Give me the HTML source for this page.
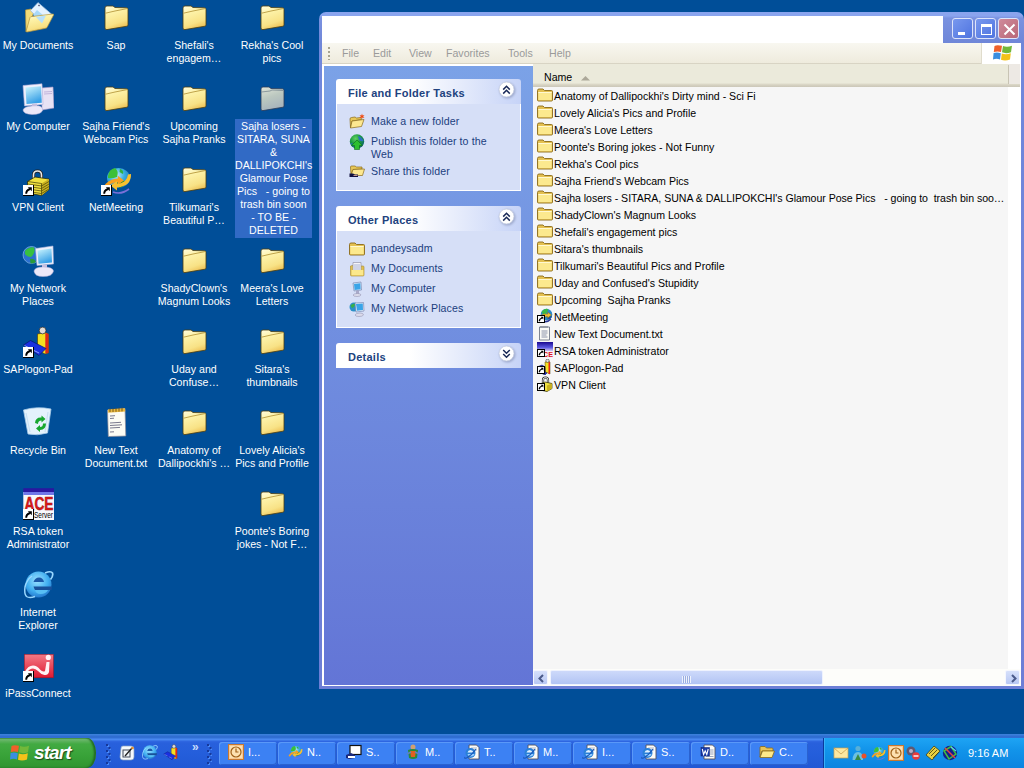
<!DOCTYPE html>
<html><head><meta charset="utf-8"><style>
*{margin:0;padding:0;box-sizing:border-box}
html,body{width:1024px;height:768px;overflow:hidden}
body{background:#004e98;position:relative;font-family:"Liberation Sans", sans-serif;font-size:11px}
.lbl{position:absolute;width:80px;text-align:center;color:#fff;font-size:10.6px;line-height:13px;white-space:nowrap}
.sel{position:absolute;background:#316ac5;color:#fff;text-align:center;font-size:10.6px;line-height:13px;white-space:nowrap;padding-top:1px}
#win{position:absolute;left:319px;top:12px;width:705px;height:677px;background:#7b8ad8;border-radius:7px 7px 0 0}
#title{position:absolute;left:3px;top:4px;width:621px;height:27px;background:#fff}
#win{background:linear-gradient(#8aa4ee 0,#8aa4ee 4px,#7a92e0 6px,#6f86d8 31px,#7088dc 40px,#6c7ed6 100%)}
#menubar{position:absolute;left:3px;top:31px;width:699px;height:21px;background:linear-gradient(#f8f7f0,#eeebdd);border-bottom:1px solid #d8d4c4}
#logo{position:absolute;left:662px;top:31px;width:40px;height:21px;background:#fff;border-left:1px solid #e0dccc}
.menu{position:absolute;top:4px;color:#9a9a9a;font-size:10.6px}
#content{position:absolute;left:3px;top:52px;width:699px;height:622px;background:#fff}
#tp{position:absolute;left:2px;top:2px;width:209px;height:619px;background:linear-gradient(#7ba2e7,#6375d6)}
.box{position:absolute;left:12px;width:185px}
.bh{position:absolute;left:0;top:0;width:185px;height:25px;border-radius:3px 3px 0 0;background:linear-gradient(90deg,#fff 40%,#c6d3f7)}
.bht{position:absolute;left:12px;top:8px;font-weight:bold;font-size:11px;letter-spacing:0.25px;color:#21427e}
.bb{position:absolute;left:0;top:25px;width:185px;background:#d6dff7;border:1px solid #fff;border-top:0}
.lk{position:absolute;left:35px;color:#203e7e;font-size:10.6px;line-height:13px;letter-spacing:0.1px;white-space:nowrap}
.chev{position:absolute;left:162px;top:2px;filter:drop-shadow(1px 1px 1px #98a4c8)}
#list{position:absolute;left:211px;top:0;width:488px;height:622px;background:#fff}
#listbg{position:absolute;left:0;top:0;width:475px;height:605px;background:#f6f6f6}
#hdr{position:absolute;left:0;top:0;width:487px;height:23px;background:linear-gradient(#ebeadb 0,#ebeadb 19px,#dedbcb 20px,#d6d2c2 21px,#cbc7b8 23px)}
.li{position:absolute;left:554px;font-size:10.6px;color:#000;white-space:nowrap;line-height:13px}
.tbtn{position:absolute;top:742px;width:58px;height:23px;background:#3c81f3;border-radius:3px;box-shadow:inset 1px 1px 0 #5a98f8, inset -1px -1px 0 #2a62d0}
.wb{position:absolute;top:6px;width:21px;height:21px;border:1px solid #dde4fa;border-radius:3px;background:linear-gradient(135deg,#7898ee,#4f74e0)}
#hsb{position:absolute;left:0;top:605px;width:488px;height:17px;background:#fdfdfa}
.sbtn{position:absolute;top:1px;width:15px;height:15px;background:linear-gradient(#d6e0fa,#b8c8f4);border:1px solid #f4f6fe;border-radius:2px}
#thumb{position:absolute;left:17px;top:1px;width:273px;height:15px;background:linear-gradient(#cdd9fa,#b2c4f4);border:1px solid #eef2fe;border-radius:2px}
#taskbar{position:absolute;left:0;top:734px;width:1024px;height:34px;background:linear-gradient(#3a7cd8 0,#3a82dc 1px,#2f6cd0 2px,#3070d4 4px,#4a8af0 5px,#4686f0 6px,#3068e2 7px,#2860dc 9px,#245edb 20px,#2158d4 100%)}
#start{position:absolute;left:0;top:738px;width:96px;height:30px;background:linear-gradient(#3a8a3a 0,#74bc74 1px,#5eb25e 3px,#42aa42 6px,#38a238 18px,#309430 100%);border-radius:0 9px 9px 0/0 15px 15px 0;box-shadow:inset -2px 0 2px #226a22}
#starttxt{position:absolute;left:34px;top:742px;color:#fff;font-style:italic;font-weight:bold;font-size:19px;letter-spacing:-0.9px;text-shadow:1px 1px 1px #1a4a1a}
.grip{position:absolute;top:744px;width:5px;height:21px}
#tray{position:absolute;left:823px;top:738px;width:201px;height:30px;background:linear-gradient(#1ea4f4,#1294ea 40%,#0c84e0);border-left:1px solid #0a3a9c;box-shadow:inset 1px 0 0 #38b0f8}
.tbt{position:absolute;top:746px;color:#fff;font-size:11px}
</style></head><body>
<svg width="0" height="0" style="position:absolute"><defs>
<linearGradient id="gFold" x1="0" y1="0" x2="0.35" y2="1">
  <stop offset="0" stop-color="#fffce0"/><stop offset="0.35" stop-color="#fdf2a8"/><stop offset="0.8" stop-color="#f8e286"/><stop offset="1" stop-color="#f0c860"/>
</linearGradient>
<linearGradient id="gFoldSel" x1="0" y1="0" x2="0.35" y2="1">
  <stop offset="0" stop-color="#e0e4d8"/><stop offset="0.5" stop-color="#bcc8c0"/><stop offset="1" stop-color="#a8b4bc"/>
</linearGradient>
<linearGradient id="gScreen" x1="0" y1="0" x2="0.4" y2="1">
  <stop offset="0" stop-color="#d0f8ff"/><stop offset="1" stop-color="#38a0e6"/>
</linearGradient>
<linearGradient id="gRed" x1="0" y1="0" x2="0" y2="1">
  <stop offset="0" stop-color="#f27a86"/><stop offset="1" stop-color="#e01830"/>
</linearGradient>
<radialGradient id="gGlobe" cx="0.4" cy="0.35" r="0.7">
  <stop offset="0" stop-color="#c9f0ff"/><stop offset="0.5" stop-color="#3ab0e0"/><stop offset="1" stop-color="#1f6fb8"/>
</radialGradient>
<radialGradient id="gIE" cx="0.45" cy="0.35" r="0.7">
  <stop offset="0" stop-color="#9ae0ff"/><stop offset="0.6" stop-color="#40aef0"/><stop offset="1" stop-color="#2070c8"/>
</radialGradient>
<symbol id="folder" viewBox="0 0 32 32">
  <path d="M5 6 Q5 4 7 4 L13 4 L15 5.5 L26.5 5.8 Q28 5.9 28 7.5 L28 23 Q28 24 27 24.2 L7 27.6 Q5 27.9 5 26 Z" fill="url(#gFold)" stroke="#4a3c10" stroke-width="0.8"/>
  <path d="M5.5 11.2 L15 9 L27.5 6.5" fill="none" stroke="#b89a40" stroke-width="0.9"/>
</symbol>
<symbol id="folderSel" viewBox="0 0 32 32">
  <path d="M5 6 Q5 4 7 4 L13 4 L15 5.5 L26.5 5.8 Q28 5.9 28 7.5 L28 23 Q28 24 27 24.2 L7 27.6 Q5 27.9 5 26 Z" fill="url(#gFoldSel)" stroke="#2a3a58" stroke-width="0.8"/>
  <path d="M5.5 9 L14 8 L16 7 L27.5 7.5" fill="none" stroke="#6f7d88" stroke-width="0.7"/>
</symbol>
<symbol id="folderS" viewBox="0 0 16 16">
  <path d="M0.5 3.5 Q0.5 2 2 2 L6 2 L7.5 3.5 L14.5 3.5 Q15.5 3.5 15.5 4.5 L15.5 13 Q15.5 14 14.5 14 L1.5 14 Q0.5 14 0.5 13 Z" fill="#e4c050" stroke="#8a6a18" stroke-width="0.9"/>
  <path d="M1.3 5.5 L14.7 5.5 L14.7 13.2 L1.3 13.2 Z" fill="#fce98e"/>
  <path d="M1.3 5.5 L14.7 5.5" stroke="#fff8d0" stroke-width="1"/>
</symbol>
<symbol id="netmeetS" viewBox="0 0 16 16">
  <circle cx="9.5" cy="6.5" r="5.8" fill="#2a88c8"/>
  <path d="M4.5 4 Q7 0 11 1 Q11 5 7 7 Z" fill="#38b848"/>
  <path d="M11 7 Q14 6 15 9 Q13 12 10.5 11 Z" fill="#1a5aa0"/>
  <path d="M1 10 Q5 5 11 6 L10.5 4 L14.5 7 L10.5 10 L10.5 8.5 Q6 8.5 3 12 Z" fill="#f0c030" stroke="#806010" stroke-width="0.4"/>
  <path d="M6 13 Q10 15 14 11" stroke="#2a3a98" stroke-width="1.6" fill="none"/>
</symbol>
<symbol id="txtS" viewBox="0 0 16 16">
  <path d="M2.5 2 L12.5 2 L12.5 15 L2.5 15 Z" fill="#fafaf6" stroke="#707888" stroke-width="0.9"/>
  <path d="M4 1 L4 3 M6 1 L6 3 M8 1 L8 3 M10 1 L10 3" stroke="#606878" stroke-width="0.8"/>
  <path d="M4.5 6 L10.5 6 M4.5 8 L10.5 8 M4.5 10 L9.5 10 M4.5 12 L10.5 12" stroke="#8088a0" stroke-width="0.9"/>
</symbol>
<symbol id="aceS" viewBox="0 0 16 16">
  <defs><linearGradient id="gAceS" x1="0" y1="0" x2="0" y2="1"><stop offset="0" stop-color="#1a0890"/><stop offset="0.6" stop-color="#5a58e0"/><stop offset="1" stop-color="#d8c8f0"/></linearGradient></defs>
  <rect x="0" y="0" width="16" height="9" fill="url(#gAceS)"/>
  <rect x="0" y="9" width="16" height="7" fill="#f4f0f8"/>
  <text x="6" y="15" font-family="Liberation Sans" font-weight="bold" font-size="8" fill="#e01020" textLength="10" lengthAdjust="spacingAndGlyphs">CE</text>
</symbol>
<symbol id="sapS" viewBox="0 0 16 16">
  <path d="M0 8 L5 6 L13 11 L8 16 L0 12 Z" fill="#1a28c8" stroke="#0a1060" stroke-width="0.6"/>
  <path d="M8 3 L12 2.5 L13 3 L13 15 L8.5 13 Z" fill="#f4e020" stroke="#403000" stroke-width="0.5"/>
  <path d="M11.5 3 L13 3 L13 15 L11.5 15 Z" fill="#e02818"/>
  <circle cx="10.5" cy="1.8" r="1.7" fill="#e0dcd8" stroke="#222" stroke-width="0.5"/>
</symbol>
<symbol id="vpnS" viewBox="0 0 16 16">
  <path d="M6 7 L6 4 Q6 1.5 8.5 1.5 Q11 1.5 11 4 L11 7" fill="none" stroke="#202020" stroke-width="2.2"/>
  <path d="M6 7 L6 4 Q6 1.5 8.5 1.5 Q11 1.5 11 4 L11 7" fill="none" stroke="#e8e8e8" stroke-width="1"/>
  <path d="M3 8 L8 6 L15 7.5 L15 12.5 L10 15.5 L3 14 Z" fill="#f0e040" stroke="#202000" stroke-width="0.7"/>
  <path d="M10 9.5 L15 7.5 L15 12.5 L10 15.5 Z" fill="#c8b020"/>
</symbol>
<symbol id="mydocs" viewBox="0 0 32 32">
  <path d="M3.5 8 L9 7 L12 10 L4 29.5 Z" fill="#f4dc78" stroke="#b8963a" stroke-width="0.7"/>
  <path d="M16 0.5 L30 12.5 L22 23 L8.5 8.5 Z" fill="#e4f2ff" stroke="#9ab8d8" stroke-width="0.7"/>
  <path d="M15 8 L22 14 L18 19 L11 13 Z" fill="#a8d8f8"/>
  <path d="M16.5 3 L17.5 4" stroke="#404060" stroke-width="1.2"/>
  <path d="M4 29.5 L8 15.5 Q8.5 14.5 10 14.5 L31 12 Q32 12 31.6 13 L25 25.5 Q24.5 26.2 23.5 26.3 L5 30 Z" fill="url(#gFold)" stroke="#b8963a" stroke-width="0.7"/>
  <path d="M14 15 L20 21.5 L24 13.5 Z" fill="#b8e0fa"/>
</symbol>
<symbol id="mycomp" viewBox="0 0 32 32">
  <path d="M19.5 5 L31 4 L32 25 L20 27 Z" fill="#e8e2f4" stroke="#a898c8" stroke-width="0.6"/>
  <path d="M22 9 L30 8.5 M22 11 L30 10.5" stroke="#b0a0d0" stroke-width="0.7"/>
  <path d="M1 2.5 L20 0.8 L21 21.5 L2.5 23 Z" fill="#f0f0fc" stroke="#b0acd8" stroke-width="0.6"/>
  <path d="M3.5 4.5 L19 3.2 L19.8 19.8 L4.5 21 Z" fill="url(#gScreen)"/>
  <path d="M10 21 L15 20.5 L15 26 L10 26.5 Z" fill="#c8c0e0"/>
  <path d="M1 27 Q2 23.5 10 23 L16 22.8 Q21 23.5 20.5 27.5 Q19 31.5 10 31.5 Q1.5 31 1 27 Z" fill="#ece8f8" stroke="#b8b0d8" stroke-width="0.5"/>
</symbol>
<symbol id="vpn" viewBox="0 0 32 32">
  <path d="M11.5 15 L11.5 11 Q11.5 7 15.5 7 Q19.5 7 19.5 11 L19.5 14" fill="none" stroke="#202020" stroke-width="3"/>
  <path d="M11.5 15 L11.5 11 Q11.5 7 15.5 7 Q19.5 7 19.5 11 L19.5 14" fill="none" stroke="#e8e8e8" stroke-width="1.6"/>
  <path d="M5.5 17.5 L13 13 L27 15 L27 25.5 L19.5 31.5 L5.5 29 Z" fill="#f0e040" stroke="#202000" stroke-width="0.7"/>
  <path d="M19.5 19.5 L27 15 L27 25.5 L19.5 31.5 Z" fill="#c8b020"/>
  <path d="M5.5 17.5 L19.5 19.5 L19.5 31.5" fill="none" stroke="#202000" stroke-width="0.6"/>
  <path d="M6 20 L19.5 22 M6 22.5 L19.5 24.5 M6 25 L19.5 27 M6 27.5 L19.5 29.5 M19.5 22 L27 17.5 M19.5 24.5 L27 20 M19.5 27 L27 22.5 M19.5 29.5 L27 25" stroke="#5a5008" stroke-width="0.8"/>
</symbol>
<symbol id="shortcut" viewBox="0 0 11 11">
  <rect x="0" y="0" width="11" height="11" fill="#000"/>
  <rect x="0" y="0" width="10" height="10" fill="#fff"/>
  <path d="M4.8 2.2 L8.8 2.2 L8.8 6.2 Z" fill="#000"/>
  <path d="M3.2 8.8 Q3 5.5 7 4" fill="none" stroke="#000" stroke-width="1.9"/>
</symbol>
<symbol id="shortcutS" viewBox="0 0 8 8">
  <rect x="0.5" y="0.5" width="7" height="7" fill="#fff" stroke="#000" stroke-width="1"/>
  <path d="M3.6 1.8 L6.3 1.8 L6.3 4.5 Z" fill="#000"/>
  <path d="M2.3 6.3 Q2.2 4 5 3" fill="none" stroke="#000" stroke-width="1.3"/>
</symbol>
<symbol id="netmeet" viewBox="0 0 32 32">
  <ellipse cx="18.5" cy="14" rx="11.5" ry="10" fill="url(#gGlobe)"/>
  <path d="M8 12 Q9 5 15 4 Q19 7 17 13 Q12 15 8 14 Z" fill="#3cc038"/>
  <path d="M20 5 Q24 6 23 10 Q21 9 19.5 8 Z" fill="#30b040"/>
  <path d="M17 17 Q22 15 27 18 Q24 23 19 24 Q17 21 17 17 Z" fill="#1a8a30"/>
  <path d="M3 24 Q7 15 18 14.5 L17.5 11.5 L24 16.5 L17.5 21 L17.5 18 Q10 18.5 6 25 Z" fill="#f8a020"/>
  <path d="M31 10 Q31.5 22 17 23.5 L17 26.5 L10.5 21.5 L17 17 L17 20 Q27 19 28 10.5 Z" fill="#f8c030"/>
  <path d="M13 28 Q21 31 29 25" stroke="#7a70d8" stroke-width="1.6" fill="none"/>
</symbol>
<symbol id="network" viewBox="0 0 32 32">
  <circle cx="9.5" cy="10" r="8.5" fill="#2a70d0" stroke="#9ac8f0" stroke-width="0.6"/>
  <path d="M3 6 Q7 1.5 12 2.5 Q14 8 9 12 Q5 12 3 9 Z" fill="#38c040"/>
  <path d="M8 14 Q12 13 14 17 Q11 19 8.5 18.5 Z" fill="#2a9a3a"/>
  <path d="M13.5 3.5 L31 1 L31.5 19 L15 20.5 Z" fill="#eef0fc" stroke="#a8b0d8" stroke-width="0.6"/>
  <path d="M15.5 5.5 L29.5 3.5 L30 17.5 L16.5 18.8 Z" fill="url(#gScreen)"/>
  <path d="M20 20 L25 19.5 L25 24 L20 24.5 Z" fill="#c8c0e0"/>
  <path d="M12 26 Q13 22 21 22 Q31 22 31.5 26 Q30.5 31.5 21 31.5 Q12.5 31.5 12 26 Z" fill="#ece8f8" stroke="#b8b0d8" stroke-width="0.5"/>
</symbol>
<symbol id="sap" viewBox="0 0 32 32">
  <path d="M15.5 8 L23.5 6.5 L26.5 8 L26.5 27 L23 28 L15.5 24 Z" fill="#f4e020" stroke="#503000" stroke-width="0.6"/>
  <path d="M23.3 6.8 L26.5 8 L26.5 27 L23.3 27.5 Z" fill="#e02818"/>
  <path d="M1.5 19 L8.5 14.5 L24 22.5 L17 29.5 Z" fill="#1a30e0" stroke="#0a1470" stroke-width="0.7"/>
  <path d="M2.5 19.5 L8.5 22.5 M11 24 L17 27" stroke="#b0c0ff" stroke-width="0.8" fill="none"/>
  <circle cx="20.6" cy="4.5" r="3.4" fill="#e0dcd8" stroke="#222" stroke-width="0.7"/>
</symbol>
<symbol id="recycle" viewBox="0 0 32 32">
  <path d="M1.5 3 Q15 -1 29 2 L25.5 26 Q15 29 6 27 Z" fill="#e4f2fc" stroke="#a8cce8" stroke-width="0.8"/>
  <path d="M4 6 L8 25 M26 5 L23 25" stroke="#c8e0f4" stroke-width="1.2"/>
  <path d="M13 16 Q13.5 10 19.5 10.5 L19.5 8.5 L23.5 12 L19.5 15.5 L19.5 13.5 Q16 13.5 16 17 Z" fill="#18a830"/>
  <path d="M24 16.5 Q24 23 18 23 L18 25 L14 21.5 L18 18 L18 20 Q21 20 21 16.5 Z" fill="#18a830"/>
</symbol>
<symbol id="txt" viewBox="0 0 32 32">
  <path d="M7.5 3 L25 1.5 L25.8 29 L8.3 29.5 Z" fill="#fcfcf4" stroke="#8a8a98" stroke-width="0.7"/>
  <path d="M8 2.5 L25 1.2 L25.2 4.5 L8.2 5.8 Z" fill="#e8b840"/>
  <path d="M10 1.5 L10 5 M13 1.3 L13 5 M16 1 L16 4.8 M19 0.8 L19 4.6 M22 0.6 L22 4.4" stroke="#705010" stroke-width="0.9"/>
  <path d="M10 9 L15 8.7 M10 11.5 L14 11.2 M10 16 L21 15.3 M10 18.5 L22 17.8 M10 21 L20 20.4 M10 25 L14 24.8" stroke="#6a6a80" stroke-width="0.9"/>
</symbol>
<symbol id="ace" viewBox="0 0 32 32">
  <rect x="1.3" y="0.2" width="31.5" height="3.8" fill="#2a18a0"/>
  <rect x="1.3" y="4" width="31.5" height="28" fill="#f8f8fc"/>
  <rect x="1.3" y="4" width="31.5" height="3" fill="#7078e8"/>
  <text x="2.5" y="21.5" font-family="Liberation Sans" font-weight="bold" font-size="18" fill="#e01818" stroke="#901010" stroke-width="0.5" textLength="29" lengthAdjust="spacingAndGlyphs">ACE</text>
  <text x="12" y="30" font-family="Liberation Sans" font-size="8.5" fill="#000" textLength="19" lengthAdjust="spacingAndGlyphs">Server</text>
</symbol>
<symbol id="ie" viewBox="0 0 32 32">
  <circle cx="16.5" cy="15.5" r="13" fill="url(#gIE)"/>
  <path d="M11.5 13 Q13 8.5 17 8.5 Q21 8.5 22 13 Z" fill="#1a58a8"/>
  <path d="M11.5 17.5 L30 17.5 L29.5 21 L13 21 Q12 19 11.5 17.5 Z" fill="#18509a"/>
  <path d="M29.5 21 L26 21 Q24 25 18.5 25 Q14 25 13 21 Z" fill="#58bff4"/>
  <path d="M10 7 Q4.5 11 3 18 Q2 25 4.5 27.5 Q7.5 29.5 13 27.5" fill="none" stroke="#9ad8ff" stroke-width="1.5"/>
  <path d="M23 4 Q29 1.5 30.5 4 Q31.5 7 28.5 10.5" fill="none" stroke="#9ad8ff" stroke-width="1.7"/>
</symbol>
<symbol id="ipass" viewBox="0 0 32 32">
  <rect x="2.3" y="4.3" width="29.2" height="23.5" fill="url(#gRed)" stroke="#a01020" stroke-width="0.5"/>
  <path d="M3 21.5 Q6 15.5 11 15.5 Q15 15.5 18 19.5 Q21 22.5 23 21 L24.5 12 L27.5 12 L27 22 Q26 25.5 22.5 25 Q19 24.5 16 21 Q13.5 18.5 11 18.5 Q7.5 18.5 5 22.5 Z" fill="#fff2f4"/>
  <circle cx="26.3" cy="7.4" r="2.6" fill="#fff2f4"/>
</symbol>

<symbol id="clock" viewBox="0 0 16 16">
  <rect x="0.5" y="0.5" width="15" height="15" fill="#f8c890" stroke="#c87830"/>
  <rect x="2" y="2" width="12" height="12" fill="#fde0b0"/>
  <circle cx="8" cy="8" r="5" fill="none" stroke="#a06018" stroke-width="1.2"/>
  <path d="M8 4.5 L8 8 L10.5 8" stroke="#a06018" stroke-width="1.2" fill="none"/>
</symbol>
<symbol id="sapmon" viewBox="0 0 16 16">
  <rect x="4" y="1.5" width="11" height="9" fill="#fff" stroke="#111" stroke-width="1.2"/>
  <path d="M0 11 L5 9 L9 11 L9 14 L3 15 L0 14 Z" fill="#1a2a80"/>
  <rect x="2" y="12" width="7" height="2" fill="#fff"/>
</symbol>
<symbol id="fig" viewBox="0 0 16 16">
  <circle cx="8" cy="3" r="2.5" fill="#d0a070"/>
  <path d="M3 6 Q8 4 13 6 L12 14 Q8 16 4 14 Z" fill="#2a8a3a"/>
  <path d="M5 7 L11 7 L10 13 L6 13 Z" fill="#e06020"/>
  <path d="M2 10 L6 8 M14 10 L10 8" stroke="#6080c0" stroke-width="1.5"/>
</symbol>
<symbol id="iedoc" viewBox="0 0 16 16">
  <path d="M5 1 L12.5 1 L15 3.5 L15 15 L5 15 Z" fill="#fbfbf8" stroke="#505060" stroke-width="0.9"/>
  <path d="M7 4 L13 4 M7 6 L13 6" stroke="#a0a8c0" stroke-width="0.8"/>
  <circle cx="6.5" cy="9" r="5" fill="#2a80d8"/>
  <path d="M3.5 8.5 L9.5 8.5 Q9 6 6.5 6 Q4 6 3.5 8.5 Z" fill="#dff0ff"/>
  <path d="M3.5 10 L10.5 10 Q10 12.5 6.5 12.5 Q4 12.5 3.5 10 Z" fill="#9ad0ff"/>
  <path d="M1 13 Q0 15 2.5 14 Q8 11 12 5" fill="none" stroke="#1a58b8" stroke-width="1.1"/>
</symbol>
<symbol id="word" viewBox="0 0 16 16">
  <path d="M4 1 L12.5 1 L15 3.5 L15 15 L4 15 Z" fill="#fbfbf8" stroke="#505060" stroke-width="0.9"/>
  <path d="M10 6 L13.5 6 M10 8 L13.5 8 M10 10 L13.5 10 M6 12.5 L13.5 12.5" stroke="#8090b0" stroke-width="0.8"/>
  <rect x="1" y="3.5" width="8.5" height="8.5" fill="#1a3aa8" stroke="#0a1a60" stroke-width="0.5"/>
  <path d="M2.3 5 L3.6 10.5 L5.2 6.8 L6.8 10.5 L8.2 5" fill="none" stroke="#fff" stroke-width="1.1"/>
</symbol>
<symbol id="folderOpen" viewBox="0 0 16 16">
  <path d="M1 3.5 Q1 2.5 2 2.5 L6 2.5 L7.5 4 L13 4 Q14 4 14 5 L14 7 L3 7 L1 13 Z" fill="#e8c458" stroke="#8a6a18" stroke-width="0.8"/>
  <path d="M3.5 7 L15.5 7 L13 13.5 L1 13.5 Z" fill="#fde88a" stroke="#8a6a18" stroke-width="0.8"/>
</symbol>

<symbol id="gripdots" viewBox="0 0 5 21">
  <path d="M1 1h2v2h-2z M3.5 4h2v2h-2z M1 7h2v2h-2z M3.5 10h2v2h-2z M1 13h2v2h-2z M3.5 16h2v2h-2z M1 19h2v2h-2z" fill="#4a8af8"/>
  <path d="M0 0h2v2h-2z M2.5 3h2v2h-2z M0 6h2v2h-2z M2.5 9h2v2h-2z M0 12h2v2h-2z M2.5 15h2v2h-2z M0 18h2v2h-2z" fill="#16389a"/>
</symbol>
<symbol id="winlogo" viewBox="0 0 20 18">
  <path d="M1.5 2 Q4 0.5 9 1.8 L8 8 Q4.5 6.8 0.8 8 Z" fill="#f0602a"/>
  <path d="M10 2 Q14 3.5 19 1.8 L18 8.2 Q13 10 9 8.3 Z" fill="#72b83a"/>
  <path d="M0.6 9 Q4 8 7.8 9.2 L7 15.5 Q3.5 14.2 0 15.5 Z" fill="#3a8ee0"/>
  <path d="M8.8 9.4 Q13 11 17.8 9.2 L17 15.6 Q12 17.5 8 15.8 Z" fill="#f4c21a"/>
</symbol>
<symbol id="chevUp" viewBox="0 0 17 17">
  <circle cx="8.5" cy="8.5" r="7.5" fill="#fff" stroke="#c4cce0" stroke-width="0.8"/>
  <path d="M5.2 8.6 L8.5 5.3 L11.8 8.6 M5.2 12.6 L8.5 9.3 L11.8 12.6" fill="none" stroke="#1a2a58" stroke-width="1.5"/>
</symbol>
<symbol id="chevDn" viewBox="0 0 17 17">
  <circle cx="8.5" cy="8.5" r="7.5" fill="#fff" stroke="#c4cce0" stroke-width="0.8"/>
  <path d="M5.2 5 L8.5 8.3 L11.8 5 M5.2 9 L8.5 12.3 L11.8 9" fill="none" stroke="#1a2a58" stroke-width="1.5"/>
</symbol>
<symbol id="newfolder" viewBox="0 0 16 16">
  <path d="M1 6 Q1 4.5 2.5 4.5 L6 4 L7.5 5 L12 4.5 L12.5 6.5 L3 8 L1.5 15 Z" fill="#e8c858" stroke="#8a6a18" stroke-width="0.7"/>
  <path d="M3 8 L15 6.5 L12.5 13.5 L1.5 15 Z" fill="#fde890" stroke="#8a6a18" stroke-width="0.7"/>
  <path d="M13 0.5 L13.6 2.5 L15.5 2 L14.2 3.4 L15.5 5 L13.6 4.4 L13 6 L12.4 4.4 L10.5 5 L11.8 3.4 L10.5 2 L12.4 2.5 Z" fill="#f04a10"/>
</symbol>
<symbol id="publish" viewBox="0 0 16 16">
  <defs><radialGradient id="gPub" cx="0.4" cy="0.3" r="0.75"><stop offset="0" stop-color="#60d060"/><stop offset="0.5" stop-color="#1a9a40"/><stop offset="1" stop-color="#0a5a70"/></radialGradient></defs>
  <circle cx="8" cy="7.5" r="7.2" fill="url(#gPub)"/>
  <path d="M9 2 Q13 3 14.5 7 Q12 8 10 6 Z" fill="#2a70c0"/>
  <path d="M1.5 9 Q3 12 6 13 L5 10 Z" fill="#2a70c0"/>
  <path d="M8 6 L13.5 11.5 L10.5 11.5 L10.5 15.5 L5.5 15.5 L5.5 11.5 L2.5 11.5 Z" fill="#2ec02e" stroke="#0a6a1a" stroke-width="0.6"/>
</symbol>
<symbol id="share" viewBox="0 0 16 16">
  <path d="M1.5 4 Q1.5 3 2.5 3 L6 3 L7.5 4 L13 4 L13 6 L4 6.5 L2 12 Z" fill="#e8c858" stroke="#8a6a18" stroke-width="0.7"/>
  <path d="M4 6.5 L15.5 6 L13.5 12.5 L2 12.5 Z" fill="#fde890" stroke="#8a6a18" stroke-width="0.7"/>
  <path d="M0.5 10.5 L4 10.5 L6 11.5 L9 11.5 L9 14 L0.5 14 Z" fill="#101040"/>
  <path d="M4.5 12.5 L8.5 12.5" stroke="#f0b8a0" stroke-width="0.8"/>
</symbol>
<symbol id="mydocsS" viewBox="0 0 16 16">
  <path d="M1.5 5 L6 4 L7 5 L14 5 Q15 5 15 6 L15 14 Q15 15 14 15 L2.5 15 Q1.5 15 1.5 14 Z" fill="#e0c050" stroke="#a88a30" stroke-width="0.6"/>
  <path d="M4 1.5 L12 1.5 L12 10 L4 10 Z" fill="#f4f4f8" stroke="#8888a0" stroke-width="0.6"/>
  <path d="M5 4 L11 4 M5 6 L11 6 M5 8 L11 8" stroke="#8a9ac8" stroke-width="0.7"/>
  <path d="M2.5 9 L14.3 9 L14.3 14.3 L2.5 14.3 Z" fill="#fbe88c"/>
</symbol>
<symbol id="mycompS" viewBox="0 0 16 16">
  <path d="M4 2 L12 1 L12.5 9 L5 10 Z" fill="#d8e8f8" stroke="#6a7aa8" stroke-width="0.6"/>
  <path d="M5 3 L11.3 2.2 L11.6 8.3 L5.6 9 Z" fill="#3aa4e8"/>
  <path d="M7 10 L10 9.6 L10 13 L7 13.4 Z" fill="#a8a8c8"/>
  <path d="M4 14 Q5 12.5 8.5 12.5 Q12 12.5 12 14 Q11 15.5 8 15.5 Q4.5 15.5 4 14 Z" fill="#dcdcec" stroke="#8888a8" stroke-width="0.5"/>
</symbol>
<symbol id="networkS" viewBox="0 0 16 16">
  <circle cx="5" cy="6" r="4.5" fill="#2a90c8"/>
  <path d="M1.5 4.5 Q4 2 6 3 Q6 6 3 7 Z" fill="#38b048"/>
  <path d="M6 2 L14.5 1.5 L15 10 L7 11 Z" fill="#e8eef8" stroke="#6a7aa8" stroke-width="0.6"/>
  <path d="M7 3 L13.8 2.6 L14 9 L8 9.7 Z" fill="#3aa4e8"/>
  <path d="M6 14 Q7 12 11 12 Q14.5 12 14.5 14 Q13.5 15.5 10 15.5 Q6.5 15.5 6 14 Z" fill="#dcdcec" stroke="#8888a8" stroke-width="0.5"/>
</symbol>
<symbol id="olk" viewBox="0 0 16 16">
  <path d="M2 3 Q2 1 4 1 L12 1 Q15 1 15 4 L15 12 Q15 15 12 15 L4 15 Q1 15 1 12 Z" fill="#f4f8fc" stroke="#8aa0c0" stroke-width="0.7"/>
  <rect x="4" y="5" width="7" height="7" fill="none" stroke="#404858" stroke-width="1"/>
  <path d="M6 11 L13 3" stroke="#202020" stroke-width="1.3"/>
  <circle cx="13.5" cy="3" r="1.3" fill="#e89030"/>
</symbol>
<symbol id="envelope" viewBox="0 0 16 16">
  <rect x="1" y="3" width="14" height="10" fill="#fce8a0" stroke="#c8a050" stroke-width="0.7"/>
  <path d="M1 3 L8 9 L15 3" fill="none" stroke="#c8a050" stroke-width="0.8"/>
</symbol>
<symbol id="msgr" viewBox="0 0 16 16">
  <circle cx="7" cy="3.5" r="2.6" fill="#58b0d8"/>
  <path d="M1.5 15 Q2 7 7 7 Q12 7 12 15 Z" fill="#6cc0e0"/>
  <path d="M4 15 L7 9 L10 15" fill="#3a8a40"/>
  <circle cx="13" cy="11" r="2.5" fill="#e8502a"/>
</symbol>
<symbol id="cam" viewBox="0 0 16 16">
  <circle cx="6" cy="6" r="4.5" fill="#605870"/>
  <circle cx="6" cy="6" r="2" fill="#b8b0c8"/>
  <circle cx="11" cy="11" r="3.8" fill="#e83a3a"/>
  <path d="M8.5 11 L13.5 11" stroke="#fff" stroke-width="1.4"/>
</symbol>
<symbol id="yel" viewBox="0 0 16 16">
  <path d="M1 10 L9 1 L15 6 L7 15 Z" fill="#e8d040" stroke="#303010" stroke-width="0.7"/>
  <path d="M4 9 L10 3 M6 11 L12 5 M8 13 L14 7" stroke="#403c10" stroke-width="0.8"/>
</symbol>
<symbol id="globeT" viewBox="0 0 16 16">
  <circle cx="8" cy="8" r="7.2" fill="#14208a"/>
  <path d="M2 6 L9 1.5 L14 9 L7 14 Z" fill="none" stroke="#40c040" stroke-width="1.5"/>
  <path d="M3 3 L13 13" stroke="#e84040" stroke-width="1.4"/>
  <path d="M9 2 L14 6" stroke="#60d0f0" stroke-width="1.3"/>
</symbol>
</defs></svg>
<svg style="position:absolute;left:22px;top:2px" width="32" height="32"><use href="#mydocs"/></svg>
<div class="lbl" style="left:-2px;top:39px">My Documents</div>
<svg style="position:absolute;left:22px;top:83px" width="32" height="32"><use href="#mycomp"/></svg>
<div class="lbl" style="left:-2px;top:120px">My Computer</div>
<svg style="position:absolute;left:22px;top:164px" width="32" height="32"><use href="#vpn"/></svg><svg style="position:absolute;left:23px;top:185px" width="11" height="11"><use href="#shortcut"/></svg>
<div class="lbl" style="left:-2px;top:201px">VPN Client</div>
<svg style="position:absolute;left:22px;top:245px" width="32" height="32"><use href="#network"/></svg>
<div class="lbl" style="left:-2px;top:282px">My Network<br>Places</div>
<svg style="position:absolute;left:22px;top:326px" width="32" height="32"><use href="#sap"/></svg><svg style="position:absolute;left:23px;top:347px" width="11" height="11"><use href="#shortcut"/></svg>
<div class="lbl" style="left:-2px;top:363px">SAPlogon-Pad</div>
<svg style="position:absolute;left:22px;top:407px" width="32" height="32"><use href="#recycle"/></svg>
<div class="lbl" style="left:-2px;top:444px">Recycle Bin</div>
<svg style="position:absolute;left:22px;top:488px" width="32" height="32"><use href="#ace"/></svg><svg style="position:absolute;left:23px;top:509px" width="11" height="11"><use href="#shortcut"/></svg>
<div class="lbl" style="left:-2px;top:525px">RSA token<br>Administrator</div>
<svg style="position:absolute;left:22px;top:569px" width="32" height="32"><use href="#ie"/></svg>
<div class="lbl" style="left:-2px;top:606px">Internet<br>Explorer</div>
<svg style="position:absolute;left:22px;top:650px" width="32" height="32"><use href="#ipass"/></svg><svg style="position:absolute;left:23px;top:671px" width="11" height="11"><use href="#shortcut"/></svg>
<div class="lbl" style="left:-2px;top:687px">iPassConnect</div>
<svg style="position:absolute;left:100px;top:2px" width="32" height="32"><use href="#folder"/></svg>
<div class="lbl" style="left:76px;top:39px">Sap</div>
<svg style="position:absolute;left:100px;top:83px" width="32" height="32"><use href="#folder"/></svg>
<div class="lbl" style="left:76px;top:120px">Sajha Friend&#x27;s<br>Webcam Pics</div>
<svg style="position:absolute;left:100px;top:164px" width="32" height="32"><use href="#netmeet"/></svg><svg style="position:absolute;left:101px;top:185px" width="11" height="11"><use href="#shortcut"/></svg>
<div class="lbl" style="left:76px;top:201px">NetMeeting</div>
<svg style="position:absolute;left:100px;top:407px" width="32" height="32"><use href="#txt"/></svg>
<div class="lbl" style="left:76px;top:444px">New Text<br>Document.txt</div>
<svg style="position:absolute;left:178px;top:2px" width="32" height="32"><use href="#folder"/></svg>
<div class="lbl" style="left:154px;top:39px">Shefali&#x27;s<br>engagem…</div>
<svg style="position:absolute;left:178px;top:83px" width="32" height="32"><use href="#folder"/></svg>
<div class="lbl" style="left:154px;top:120px">Upcoming<br>Sajha Pranks</div>
<svg style="position:absolute;left:178px;top:164px" width="32" height="32"><use href="#folder"/></svg>
<div class="lbl" style="left:154px;top:201px">Tilkumari&#x27;s<br>Beautiful P…</div>
<svg style="position:absolute;left:178px;top:245px" width="32" height="32"><use href="#folder"/></svg>
<div class="lbl" style="left:154px;top:282px">ShadyClown&#x27;s<br>Magnum Looks</div>
<svg style="position:absolute;left:178px;top:326px" width="32" height="32"><use href="#folder"/></svg>
<div class="lbl" style="left:154px;top:363px">Uday and<br>Confuse…</div>
<svg style="position:absolute;left:178px;top:407px" width="32" height="32"><use href="#folder"/></svg>
<div class="lbl" style="left:154px;top:444px">Anatomy of<br>Dallipockhi&#x27;s …</div>
<svg style="position:absolute;left:256px;top:2px" width="32" height="32"><use href="#folder"/></svg>
<div class="lbl" style="left:232px;top:39px">Rekha&#x27;s Cool<br>pics</div>
<svg style="position:absolute;left:256px;top:245px" width="32" height="32"><use href="#folder"/></svg>
<div class="lbl" style="left:232px;top:282px">Meera&#x27;s Love<br>Letters</div>
<svg style="position:absolute;left:256px;top:326px" width="32" height="32"><use href="#folder"/></svg>
<div class="lbl" style="left:232px;top:363px">Sitara&#x27;s<br>thumbnails</div>
<svg style="position:absolute;left:256px;top:407px" width="32" height="32"><use href="#folder"/></svg>
<div class="lbl" style="left:232px;top:444px">Lovely Alicia&#x27;s<br>Pics and Profile</div>
<svg style="position:absolute;left:256px;top:488px" width="32" height="32"><use href="#folder"/></svg>
<div class="lbl" style="left:232px;top:525px">Poonte&#x27;s Boring<br>jokes - Not F…</div>
<svg style="position:absolute;left:256px;top:83px" width="32" height="32"><use href="#folderSel"/></svg>
<div class="sel" style="left:235px;top:119px;width:77px;height:119px">Sajha losers -<br>SITARA, SUNA<br>&amp;<br>DALLIPOKCHI's<br>Glamour Pose<br>Pics &nbsp; - going to<br>trash bin soon<br>- TO BE -<br>DELETED</div>
<div id="win">
 <div id="title"></div>
 <div class="wb" style="left:633px"><div style="position:absolute;left:5px;top:13px;width:7px;height:3px;background:#fff"></div></div>
 <div class="wb" style="left:656px"><div style="position:absolute;left:5px;top:5px;width:11px;height:11px;border:1px solid #fff;border-top-width:3px"></div></div>
 <div class="wb" style="left:679px;background:linear-gradient(135deg,#d08a9a,#b86878)"><svg style="position:absolute;left:4px;top:4px" width="13" height="13"><path d="M1.5 1.5 L11.5 11.5 M11.5 1.5 L1.5 11.5" stroke="#fff" stroke-width="2"/></svg></div>
 <div id="menubar">
  <div style="position:absolute;left:6px;top:4px;width:2px;height:13px;background:repeating-linear-gradient(#a8a490 0 2px,transparent 2px 4px)"></div>
  <span class="menu" style="left:20px">File</span>
  <span class="menu" style="left:51px">Edit</span>
  <span class="menu" style="left:87px">View</span>
  <span class="menu" style="left:124px">Favorites</span>
  <span class="menu" style="left:186px">Tools</span>
  <span class="menu" style="left:227px">Help</span>
 </div>
 <div id="logo"><svg style="position:absolute;left:11px;top:1px" width="20" height="18"><use href="#winlogo"/></svg></div>
 <div id="content">
  <div id="tp">
   <div class="box" style="top:13px">
    <div class="bh"><span class="bht">File and Folder Tasks</span><svg class="chev" width="17" height="17"><use href="#chevUp"/></svg></div>
    <div class="bb" style="height:87px"></div>
   </div>
   <div class="box" style="top:140px">
    <div class="bh"><span class="bht">Other Places</span><svg class="chev" width="17" height="17"><use href="#chevUp"/></svg></div>
    <div class="bb" style="height:97px"></div>
   </div>
   <div class="box" style="top:277px">
    <div class="bh"><span class="bht">Details</span><svg class="chev" width="17" height="17"><use href="#chevDn"/></svg></div>
   </div>
  </div>
  <div id="list"><div id="listbg"></div><div id="hdr">
   <span style="position:absolute;left:11px;top:7px;font-size:10.6px;color:#000">Name</span>
   <svg style="position:absolute;left:48px;top:12px" width="10" height="5"><path d="M0 4.5 L4.5 0 L9 4.5 Z" fill="#aca899"/></svg>
   <div style="position:absolute;left:475px;top:1px;width:1px;height:19px;background:#c8c4b4"></div><div style="position:absolute;left:476px;top:0;width:11px;height:20px;background:#ede9e4"></div>
  </div>
  <div id="hsb">
   <div class="sbtn" style="left:0"><svg width="15" height="15"><path d="M9 4 L5.5 7.5 L9 11" fill="none" stroke="#4a5a8a" stroke-width="2"/></svg></div>
   <div id="thumb"><div style="position:absolute;left:131px;top:5px;width:9px;height:7px;background:repeating-linear-gradient(90deg,#eef2fc 0 1px,#9aaee0 1px 2px)"></div></div>
   <div class="sbtn" style="left:472px"><svg width="15" height="15"><path d="M6 4 L9.5 7.5 L6 11" fill="none" stroke="#4a5a8a" stroke-width="2"/></svg></div>
  </div>
  </div>
 </div>
</div>
<svg style="position:absolute;left:537px;top:87px" width="16" height="16"><use href="#folderS"/></svg>
<div class="li" style="top:90px">Anatomy of Dallipockhi's Dirty mind - Sci Fi</div>
<svg style="position:absolute;left:537px;top:104px" width="16" height="16"><use href="#folderS"/></svg>
<div class="li" style="top:107px">Lovely Alicia's Pics and Profile</div>
<svg style="position:absolute;left:537px;top:121px" width="16" height="16"><use href="#folderS"/></svg>
<div class="li" style="top:124px">Meera's Love Letters</div>
<svg style="position:absolute;left:537px;top:138px" width="16" height="16"><use href="#folderS"/></svg>
<div class="li" style="top:141px">Poonte's Boring jokes - Not Funny</div>
<svg style="position:absolute;left:537px;top:155px" width="16" height="16"><use href="#folderS"/></svg>
<div class="li" style="top:158px">Rekha's Cool pics</div>
<svg style="position:absolute;left:537px;top:172px" width="16" height="16"><use href="#folderS"/></svg>
<div class="li" style="top:175px">Sajha Friend's Webcam Pics</div>
<svg style="position:absolute;left:537px;top:189px" width="16" height="16"><use href="#folderS"/></svg>
<div class="li" style="top:192px"><span style='letter-spacing:-0.04px'>Sajha losers - SITARA, SUNA &amp; DALLIPOKCHI's Glamour Pose Pics &nbsp; - going to &nbsp;trash bin soo&#8230;</span></div>
<svg style="position:absolute;left:537px;top:206px" width="16" height="16"><use href="#folderS"/></svg>
<div class="li" style="top:209px">ShadyClown's Magnum Looks</div>
<svg style="position:absolute;left:537px;top:223px" width="16" height="16"><use href="#folderS"/></svg>
<div class="li" style="top:226px">Shefali's engagement pics</div>
<svg style="position:absolute;left:537px;top:240px" width="16" height="16"><use href="#folderS"/></svg>
<div class="li" style="top:243px">Sitara's thumbnails</div>
<svg style="position:absolute;left:537px;top:257px" width="16" height="16"><use href="#folderS"/></svg>
<div class="li" style="top:260px">Tilkumari's Beautiful Pics and Profile</div>
<svg style="position:absolute;left:537px;top:274px" width="16" height="16"><use href="#folderS"/></svg>
<div class="li" style="top:277px">Uday and Confused's Stupidity</div>
<svg style="position:absolute;left:537px;top:291px" width="16" height="16"><use href="#folderS"/></svg>
<div class="li" style="top:294px">Upcoming &nbsp;Sajha Pranks</div>
<svg style="position:absolute;left:537px;top:308px" width="16" height="16"><use href="#netmeetS"/></svg><svg style="position:absolute;left:537px;top:315px" width="8" height="8"><use href="#shortcutS"/></svg>
<div class="li" style="top:311px">NetMeeting</div>
<svg style="position:absolute;left:537px;top:325px" width="16" height="16"><use href="#txtS"/></svg>
<div class="li" style="top:328px">New Text Document.txt</div>
<svg style="position:absolute;left:537px;top:342px" width="16" height="16"><use href="#aceS"/></svg><svg style="position:absolute;left:537px;top:349px" width="8" height="8"><use href="#shortcutS"/></svg>
<div class="li" style="top:345px">RSA token Administrator</div>
<svg style="position:absolute;left:537px;top:359px" width="16" height="16"><use href="#sapS"/></svg><svg style="position:absolute;left:537px;top:366px" width="8" height="8"><use href="#shortcutS"/></svg>
<div class="li" style="top:362px">SAPlogon-Pad</div>
<svg style="position:absolute;left:537px;top:376px" width="16" height="16"><use href="#vpnS"/></svg><svg style="position:absolute;left:537px;top:383px" width="8" height="8"><use href="#shortcutS"/></svg>
<div class="li" style="top:379px">VPN Client</div>
<svg style="position:absolute;left:349px;top:113px" width="16" height="16"><use href="#newfolder"/></svg>
<div class="lk" style="left:371px;top:115px">Make a new folder</div>
<svg style="position:absolute;left:349px;top:134px" width="16" height="16"><use href="#publish"/></svg>
<div class="lk" style="left:371px;top:135px">Publish this folder to the<br>Web</div>
<svg style="position:absolute;left:349px;top:163px" width="16" height="16"><use href="#share"/></svg>
<div class="lk" style="left:371px;top:165px">Share this folder</div>
<svg style="position:absolute;left:349px;top:241px" width="16" height="16"><use href="#folderS"/></svg>
<div class="lk" style="left:371px;top:242px">pandeysadm</div>
<svg style="position:absolute;left:349px;top:261px" width="16" height="16"><use href="#mydocsS"/></svg>
<div class="lk" style="left:371px;top:262px">My Documents</div>
<svg style="position:absolute;left:349px;top:281px" width="16" height="16"><use href="#mycompS"/></svg>
<div class="lk" style="left:371px;top:282px">My Computer</div>
<svg style="position:absolute;left:349px;top:301px" width="16" height="16"><use href="#networkS"/></svg>
<div class="lk" style="left:371px;top:302px">My Network Places</div>
<div id="taskbar"></div>
<div id="start"></div>
<svg style="position:absolute;left:10px;top:744px" width="20" height="18"><use href="#winlogo"/></svg>
<div id="starttxt">start</div>
<svg class="grip" style="left:106px" width="5" height="21"><use href="#gripdots"/></svg>
<svg class="grip" style="left:207px" width="5" height="21"><use href="#gripdots"/></svg>
<svg style="position:absolute;left:119px;top:745px" width="16" height="16"><use href="#olk"/></svg>
<svg style="position:absolute;left:141px;top:744px" width="17" height="17"><use href="#ie"/></svg>
<svg style="position:absolute;left:163px;top:744px" width="17" height="17"><use href="#sap"/></svg>
<div style="position:absolute;left:192px;top:740px;color:#c8dcfc;font-size:12px;font-weight:bold;letter-spacing:-1px">&#187;</div>
<div class="tbtn" style="left:219px"></div>
<svg style="position:absolute;left:228px;top:744px" width="16" height="16"><use href="#clock"/></svg>
<div class="tbt" style="left:248px">I...</div>
<div class="tbtn" style="left:278px"></div>
<svg style="position:absolute;left:287px;top:744px" width="16" height="16"><use href="#netmeet"/></svg>
<div class="tbt" style="left:307px">N..</div>
<div class="tbtn" style="left:337px"></div>
<svg style="position:absolute;left:346px;top:744px" width="16" height="16"><use href="#sapmon"/></svg>
<div class="tbt" style="left:366px">S..</div>
<div class="tbtn" style="left:396px"></div>
<svg style="position:absolute;left:405px;top:744px" width="16" height="16"><use href="#fig"/></svg>
<div class="tbt" style="left:425px">M..</div>
<div class="tbtn" style="left:455px"></div>
<svg style="position:absolute;left:464px;top:744px" width="16" height="16"><use href="#iedoc"/></svg>
<div class="tbt" style="left:484px">T..</div>
<div class="tbtn" style="left:514px"></div>
<svg style="position:absolute;left:523px;top:744px" width="16" height="16"><use href="#iedoc"/></svg>
<div class="tbt" style="left:543px">M..</div>
<div class="tbtn" style="left:573px"></div>
<svg style="position:absolute;left:582px;top:744px" width="16" height="16"><use href="#iedoc"/></svg>
<div class="tbt" style="left:602px">I...</div>
<div class="tbtn" style="left:632px"></div>
<svg style="position:absolute;left:641px;top:744px" width="16" height="16"><use href="#iedoc"/></svg>
<div class="tbt" style="left:661px">S..</div>
<div class="tbtn" style="left:691px"></div>
<svg style="position:absolute;left:700px;top:744px" width="16" height="16"><use href="#word"/></svg>
<div class="tbt" style="left:720px">D..</div>
<div class="tbtn" style="left:750px"></div>
<svg style="position:absolute;left:759px;top:744px" width="16" height="16"><use href="#folderOpen"/></svg>
<div class="tbt" style="left:779px">C..</div>
<div id="tray"></div>
<svg style="position:absolute;left:833px;top:745px" width="16" height="16"><use href="#envelope"/></svg>
<svg style="position:absolute;left:851px;top:745px" width="16" height="16"><use href="#msgr"/></svg>
<svg style="position:absolute;left:870px;top:745px" width="16" height="16"><use href="#netmeet"/></svg>
<svg style="position:absolute;left:888px;top:745px" width="16" height="16"><use href="#clock"/></svg>
<svg style="position:absolute;left:905px;top:745px" width="16" height="16"><use href="#cam"/></svg>
<svg style="position:absolute;left:925px;top:745px" width="16" height="16"><use href="#yel"/></svg>
<svg style="position:absolute;left:942px;top:745px" width="16" height="16"><use href="#globeT"/></svg>
<div style="position:absolute;left:968px;top:747px;color:#fff;font-size:11px">9:16 AM</div>
</body></html>
